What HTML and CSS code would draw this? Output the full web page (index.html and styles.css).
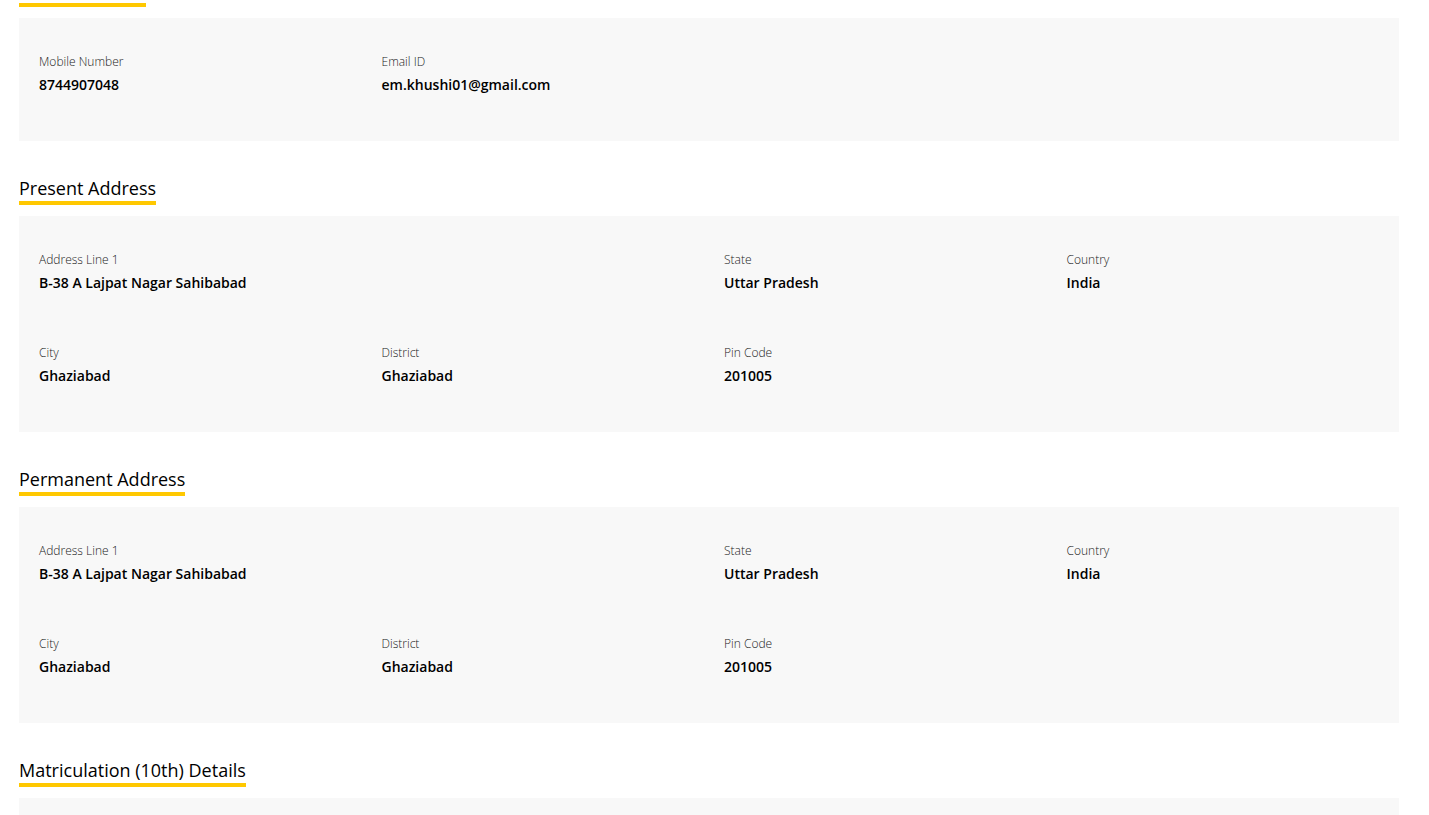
FILE: index.html
```html
<!DOCTYPE html>
<html lang="en">
<head>
<meta charset="utf-8">
<title>Profile Details</title>
<link rel="stylesheet" href="styles.css">
</head>
<body>
<main class="page">
  <section class="section section-first">
    <h2 class="section-title">Contact Details</h2>
    <div class="card">
      <div class="field"><div class="label">Mobile Number</div><div class="value">8744907048</div></div>
      <div class="field"><div class="label">Email ID</div><div class="value">em.khushi01@gmail.com</div></div>
    </div>
  </section>

  <section class="section">
    <h2 class="section-title">Present Address</h2>
    <div class="card">
      <div class="field span-2"><div class="label">Address Line 1</div><div class="value">B-38 A Lajpat Nagar Sahibabad</div></div>
      <div class="field"><div class="label">State</div><div class="value">Uttar Pradesh</div></div>
      <div class="field"><div class="label">Country</div><div class="value">India</div></div>
      <div class="field"><div class="label">City</div><div class="value">Ghaziabad</div></div>
      <div class="field"><div class="label">District</div><div class="value">Ghaziabad</div></div>
      <div class="field"><div class="label">Pin Code</div><div class="value">201005</div></div>
    </div>
  </section>

  <section class="section">
    <h2 class="section-title">Permanent Address</h2>
    <div class="card">
      <div class="field span-2"><div class="label">Address Line 1</div><div class="value">B-38 A Lajpat Nagar Sahibabad</div></div>
      <div class="field"><div class="label">State</div><div class="value">Uttar Pradesh</div></div>
      <div class="field"><div class="label">Country</div><div class="value">India</div></div>
      <div class="field"><div class="label">City</div><div class="value">Ghaziabad</div></div>
      <div class="field"><div class="label">District</div><div class="value">Ghaziabad</div></div>
      <div class="field"><div class="label">Pin Code</div><div class="value">201005</div></div>
    </div>
  </section>

  <section class="section">
    <h2 class="section-title">Matriculation (10th) Details</h2>
    <div class="card card-empty"></div>
  </section>
</main>
</body>
</html>
```

FILE: styles.css
```css
html, body {
  margin: 0;
  padding: 0;
  background: #ffffff;
}

body {
  font-family: "Open Sans", "Liberation Sans", sans-serif;
  color: #000000;
  overflow: hidden;
}

.page {
  width: 1380px;
  margin-left: 19px;
}

.section {
  margin-top: 34px;
}

.section-first {
  margin-top: -23px;
}

.section-title {
  display: inline-block;
  margin: 0 0 11px 0;
  font-size: 18px;
  line-height: 24px;
  font-weight: 400;
  color: #000000;
  padding-top: 1px;
  padding-bottom: 1px;
  border-bottom: 4px solid #ffc800;
}

.card {
  background: #f8f8f8;
  padding: 35px 0 46px 10px;
  display: grid;
  grid-template-columns: repeat(4, 1fr);
  row-gap: 51px;
}

.card-empty {
  min-height: 60px;
  padding: 0;
}

.field {
  padding-left: 10px;
  min-width: 0;
}

.span-2 {
  grid-column: span 2;
}

.label {
  font-size: 12px;
  line-height: 18px;
  font-weight: 300;
  color: #222222;
}

.value {
  margin-top: 4px;
  font-size: 14px;
  line-height: 20px;
  font-weight: 600;
  color: #000000;
}
```
